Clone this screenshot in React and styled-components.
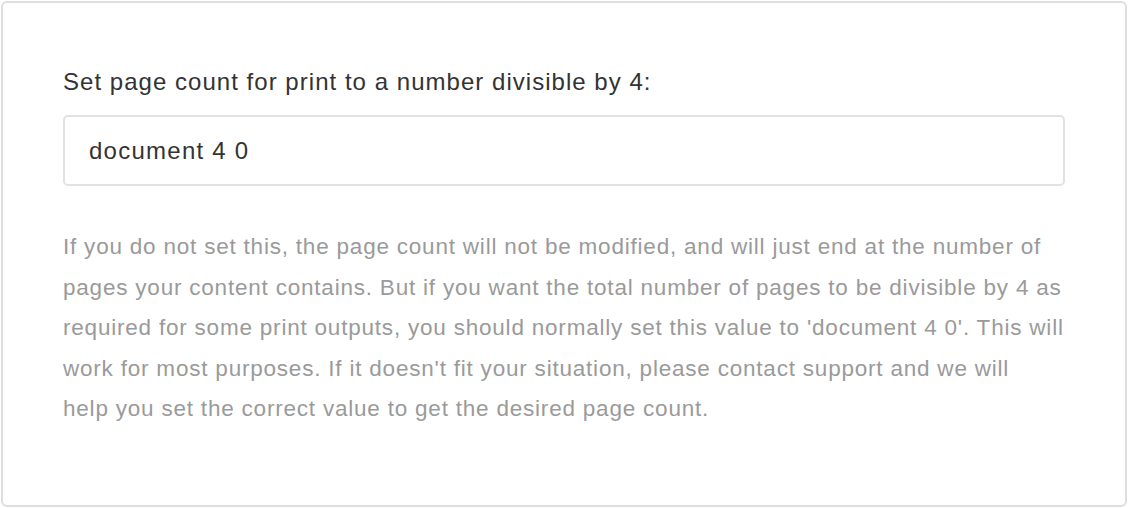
import React from 'react';
import styled, { createGlobalStyle } from 'styled-components';

const GlobalStyle = createGlobalStyle`
    html, body {
        margin: 0;
        padding: 0;
        background: #ffffff;
    }
    body {
        font-family: "Liberation Sans", Arial, sans-serif;
        -webkit-font-smoothing: antialiased;
    }
`;

const Page = styled.div`
    padding: 1px;
    height: 508px;
    box-sizing: border-box;
`;

const Card = styled.div`
    box-sizing: border-box;
    height: 100%;
    border: 2px solid #dedede;
    border-radius: 6px;
    padding: 64px 60px 0 60px;
    background: #fff;
`;

const Field = styled.div`
    display: flex;
    flex-direction: column;
`;

const Label = styled.label`
    font-size: 24px;
    line-height: 30px;
    letter-spacing: 1.03px;
    color: #333333;
    margin-bottom: 18px;
`;

const Input = styled.input`
    box-sizing: border-box;
    height: 71px;
    width: 100%;
    border: 2px solid #e2e2e2;
    border-radius: 5px;
    padding: 0 24px;
    font-family: inherit;
    font-size: 24px;
    letter-spacing: 1.25px;
    color: #333333;
    outline: none;
`;

const Help = styled.p`
    margin: 41px 0 0 0;
    font-size: 22.5px;
    line-height: 40.5px;
    letter-spacing: 0.79px;
    color: #9a9a9a;
    white-space: nowrap;
`;

const lines = [
    "If you do not set this, the page count will not be modified, and will just end at the number of",
    "pages your content contains. But if you want the total number of pages to be divisible by 4 as",
    "required for some print outputs, you should normally set this value to 'document 4 0'. This will",
    "work for most purposes. If it doesn't fit your situation, please contact support and we will",
    "help you set the correct value to get the desired page count.",
];

export default function App() {
    return (
        <>
            <GlobalStyle />
            <Page>
                <Card>
                    <Field>
                        <Label htmlFor="pagecount">Set page count for print to a number divisible by 4:</Label>
                        <Input id="pagecount" defaultValue="document 4 0" />
                    </Field>
                    <Help>
                        {lines.map((line, i) => (
                            <React.Fragment key={i}>
                                {line}
                                {i < lines.length - 1 && <br />}
                            </React.Fragment>
                        ))}
                    </Help>
                </Card>
            </Page>
        </>
    );
}
